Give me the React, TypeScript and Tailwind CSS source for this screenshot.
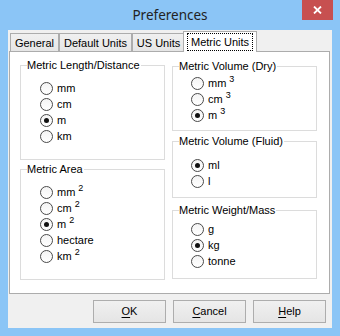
import React from 'react';

type Opt = { label: string; sup?: string; checked?: boolean };

const ui = "font-['Liberation_Sans',Arial,sans-serif]";

function Radio({ opt }: { opt: Opt }) {
  return (
    <div className="flex h-[16px] items-center gap-[4px]">
      <span className="flex h-[13px] w-[13px] items-center justify-center rounded-full border border-[#4a4a4a] bg-gradient-to-b from-[#f4f4f4] to-white">
        {opt.checked && <span className="h-[5px] w-[5px] rounded-full bg-[#111]" />}
      </span>
      <span className="leading-none">
        {opt.label}
        {opt.sup && <sup className="ml-[3px] text-[9px]">{opt.sup}</sup>}
      </span>
    </div>
  );
}

function Group({
  title,
  opts,
  className,
  inner,
}: {
  title: string;
  opts: Opt[];
  className: string;
  inner: string;
}) {
  return (
    <fieldset className={`border border-[#dcdcdc] px-0 ${className}`}>
      <legend className="ml-[6px] px-0 pr-[1px] leading-[14px]">{title}</legend>
      <div className={inner}>
        {opts.map((o) => (
          <Radio key={o.label} opt={o} />
        ))}
      </div>
    </fieldset>
  );
}

const tabs = [
  { name: 'General', w: 'w-[49px]' },
  { name: 'Default Units', w: 'w-[73px]' },
  { name: 'US Units', w: 'w-[53px]' },
];

function Btn({ k, rest }: { k: string; rest: string }) {
  return (
    <button className="flex h-[23px] w-[73px] items-center justify-center border border-[#adadad] bg-gradient-to-b from-[#f0f0f0] to-[#e5e5e5] text-[11px] text-black">
      <span className="underline decoration-1 underline-offset-[2px]">{k}</span>
      {rest}
    </button>
  );
}

export default function App() {
  return (
    <div className={`flex h-[336px] w-[340px] flex-col bg-[#8bc5f6] text-[11px] text-black ${ui}`}>
      {/* title bar */}
      <div className="grid h-[30px] grid-cols-[1fr_auto_1fr]">
        <div />
        <div className="flex h-[30px] items-center font-['Noto_Sans',sans-serif] text-[13.5px] text-[#222]">
          Preferences
        </div>
        <div className="flex justify-end pr-[7px]">
          <div className="flex h-[20px] w-[31px] items-center justify-center bg-[#c75050]">
            <svg width="9" height="8" viewBox="0 0 9 8">
              <path d="M1 0.5 L8 7.5 M8 0.5 L1 7.5" stroke="#fff" strokeWidth="1.8" />
            </svg>
          </div>
        </div>
      </div>

      {/* client */}
      <div className="mx-[8px] mb-[8px] flex flex-1 flex-col bg-[#f0f0f0]">
        <div className="ml-[2px] mt-[1px] flex h-[21px] items-end">
          {tabs.map((t) => (
            <div
              key={t.name}
              className={`flex h-[19px] items-center justify-center border border-b-0 border-[#acacac] bg-gradient-to-b from-[#f0f0f0] to-[#e5e5e5] ${t.w}`}
            >
              {t.name}
            </div>
          ))}
          <div className="relative z-10 -ml-[2px] flex h-[21px] w-[74px] border border-b-0 border-[#acacac] bg-white px-[3px] pb-[1px] pt-[1px]">
            <div className="flex flex-1 items-center justify-center border border-dotted border-black">
              Metric Units
            </div>
          </div>
        </div>

        <div className="ml-[1px] -mt-[1px] h-[243px] w-[321px] border border-[#acacac] bg-white pl-[10px] pt-[6px]">
          <div className="grid grid-cols-[145px_145px] gap-x-[7px]">
            <div className="flex flex-col">
              <Group
                title="Metric Length/Distance"
                className="h-[102px]"
                inner="pl-[19px] pt-[8px]"
                opts={[{ label: 'mm' }, { label: 'cm' }, { label: 'm', checked: true }, { label: 'km' }]}
              />
              <Group
                title="Metric Area"
                className="mt-[2px] h-[118px]"
                inner="pl-[19px] pt-[8px]"
                opts={[
                  { label: 'mm', sup: '2' },
                  { label: 'cm', sup: '2' },
                  { label: 'm', sup: '2', checked: true },
                  { label: 'hectare' },
                  { label: 'km', sup: '2' },
                ]}
              />
            </div>
            <div className="flex flex-col pt-[1px]">
              <Group
                title="Metric Volume (Dry)"
                className="h-[72px]"
                inner="pl-[18px] pt-[2px]"
                opts={[
                  { label: 'mm', sup: '3' },
                  { label: 'cm', sup: '3' },
                  { label: 'm', sup: '3', checked: true },
                ]}
              />
              <Group
                title="Metric Volume (Fluid)"
                className="mt-[3px] h-[64px]"
                inner="pl-[18px] pt-[9px]"
                opts={[{ label: 'ml', checked: true }, { label: 'l' }]}
              />
              <Group
                title="Metric Weight/Mass"
                className="mt-[5px] h-[76px]"
                inner="pl-[18px] pt-[4px]"
                opts={[{ label: 'g' }, { label: 'kg', checked: true }, { label: 'tonne' }]}
              />
            </div>
          </div>
        </div>

        <div className="mt-[6px] flex justify-end gap-[7px] pr-[6px]">
          <Btn k="O" rest="K" />
          <Btn k="C" rest="ancel" />
          <Btn k="H" rest="elp" />
        </div>
      </div>
    </div>
  );
}
